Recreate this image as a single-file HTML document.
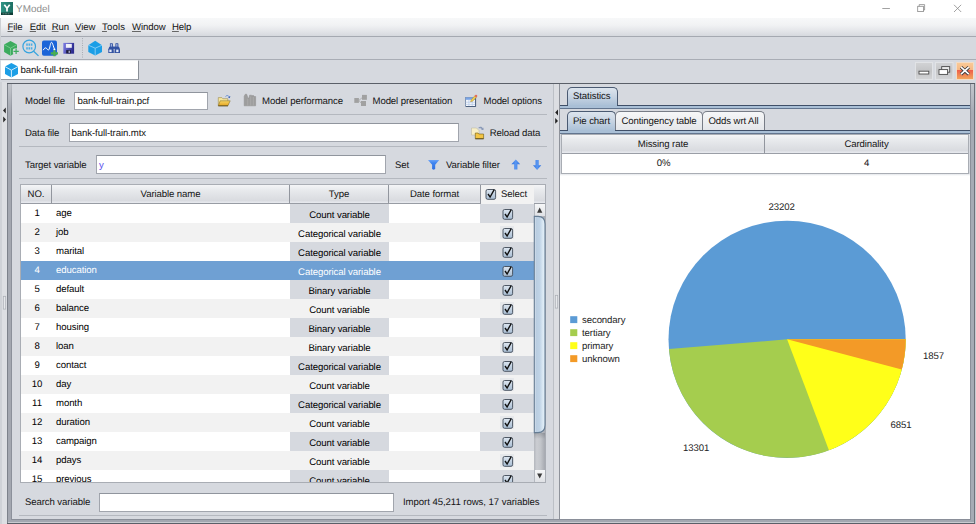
<!DOCTYPE html>
<html><head><meta charset="utf-8"><title>YModel</title>
<style>
*{box-sizing:border-box;margin:0;padding:0}
html,body{width:976px;height:524px;overflow:hidden;background:#d6d9df}
body{position:relative;font-family:"Liberation Sans",Arial,sans-serif;font-size:9.6px;letter-spacing:-0.1px;color:#141414;line-height:1;text-rendering:geometricPrecision}
.abs{position:absolute}
.t{position:absolute;white-space:nowrap;line-height:12px;height:12px;margin-top:1px}
u{text-decoration:underline;text-decoration-color:#666;text-decoration-thickness:0.8px;text-underline-offset:1px}
#title{left:0;top:0;width:976px;height:18px;background:#fff}
#menu{left:0;top:18px;width:976px;height:18px;background:linear-gradient(#f7f8f9 0%,#f1f2f4 40%,#e2e4e8 75%,#d6d9de 100%)}
#menuline{left:0;top:36px;width:976px;height:1px;background:#a5a9b1}
#toolline{left:0;top:59px;width:976px;height:1px;background:#a9adb5}
.inp{position:absolute;background:#fff;border:1px solid #a1a5ad;border-top-color:#90959d;height:18px}
.sep{position:absolute;height:1px;background:#b4b8bf;left:19px;width:528px}
.hdr{position:absolute;top:185px;height:19px;background:linear-gradient(#f4f5f7 0%,#e8eaed 28%,#dcdee2 75%,#d9dbe0 86%,#e9ebf0 100%);border-right:1px solid #92969e;border-bottom:1px solid #989ca4;text-align:center;line-height:20px;overflow:hidden}
#tbl{left:21px;top:204px;width:513px;height:278px;overflow:hidden;background:#fff}
.row{position:absolute;left:0;width:513px;height:19px;line-height:19px}
.row span{position:absolute;top:0;height:19px}
.c-no{left:0;width:32px;text-align:center;top:0 !important}
.c-name{left:35px;top:0 !important}
.c-type{left:269px;width:99px;text-align:center;line-height:23px;overflow:hidden}
.c-sel{left:459px;width:54px}
.tab{position:absolute;border:1px solid #4a5a72;border-bottom:none;border-radius:5px 5px 0 0;text-align:center}
.rh{position:absolute;top:135px;height:19px;background:linear-gradient(#f4f5f7 0%,#e8eaed 28%,#dcdee2 75%,#d9dbe0 86%,#e9ebf0 100%);border-bottom:1px solid #9a9ea6;text-align:center;line-height:20px;overflow:hidden}
</style></head>
<body>
<svg class="abs" width="0" height="0" style="left:0;top:0"><defs><linearGradient id="cbg" x1="0" y1="0" x2="0" y2="1"><stop offset="0" stop-color="#dde6f0"/><stop offset="1" stop-color="#a8bdd3"/></linearGradient></defs></svg>
<!-- title bar -->
<div id="title" class="abs">
  <svg class="abs" style="left:1px;top:2px" width="12" height="13" viewBox="0 0 12 13"><defs><linearGradient id="yg" x1="0" y1="0" x2="1" y2="0"><stop offset="0" stop-color="#2f9485"/><stop offset="1" stop-color="#1f6f63"/></linearGradient></defs><rect width="12" height="13" fill="url(#yg)"/><rect y="10.6" width="12" height="2.4" fill="#0f3d36"/><path d="M1.5 11.8 H8.5" stroke="#8fb5ae" stroke-width="0.6" stroke-dasharray="2 0.5"/><path d="M3.300 2.700 L6 6.200 L8.700 2.700 M6 6 V9.500" stroke="#fff" stroke-width="1.700" fill="none"/></svg>
  <span class="t" style="left:16px;top:3px;color:#8c8c8c;font-size:9.900px;letter-spacing:0.050px">YModel</span>
  <svg class="abs" style="left:876px;top:0" width="100" height="18" viewBox="876 0 100 18"><g stroke="#8a8a8a" stroke-width="0.8" fill="none"><path d="M882.3 8.500 H889.900"/><rect x="917.700" y="6.300" width="5.800" height="5.300"/><path d="M919.200 6.300 V4.600 H924.600 V10 H923.500"/><path d="M954 4.800 L961.200 12 M961.200 4.800 L954 12"/></g></svg>
</div>
<!-- menu -->
<div id="menu" class="abs">
  <span class="t" style="left:7.500px;top:3px"><u>F</u>ile</span>
  <span class="t" style="left:29.700px;top:3px"><u>E</u>dit</span>
  <span class="t" style="left:51.700px;top:3px"><u>R</u>un</span>
  <span class="t" style="left:75px;top:3px"><u>V</u>iew</span>
  <span class="t" style="left:102px;top:3px;letter-spacing:0.150px"><u>T</u>ools</span>
  <span class="t" style="left:132px;top:3px"><u>W</u>indow</span>
  <span class="t" style="left:172px;top:3px"><u>H</u>elp</span>
</div>
<div id="menuline" class="abs"></div>
<div class="abs" style="left:0;top:18px;width:1px;height:42px;background:#cdd0d4"></div>
<!-- toolbar icons (absolute page coordinates) -->
<svg class="abs" style="left:0;top:37px" width="130" height="22" viewBox="0 37 130 22">
  <!-- green cube plus -->
  <path d="M10.5 40.9 L17 44.5 V52 L10.5 55.7 L4.1 52 V44.5 Z" fill="#3cab5e"/>
  <path d="M4.1 44.5 L10.5 48.2 L17 44.5 M10.5 48.2 V55.7" stroke="#8bd6a1" stroke-width="0.7" fill="none"/>
  <rect x="12.9" y="48.6" width="6.3" height="5.6" rx="1.5" fill="#d6d9df"/>
  <path d="M16.1 48.9 V53.9 M13.5 51.4 H18.8" stroke="#3cab5e" stroke-width="1.2"/>
  <!-- magnifier -->
  <circle cx="29.2" cy="46.5" r="6.3" fill="none" stroke="#35a3de" stroke-width="1.2"/>
  <path d="M33.6 51.3 L38.5 55.9" stroke="#35a3de" stroke-width="1.3"/>
  <path d="M26.2 44.6 H32.4 M26.2 48.4 H32.4" stroke="#4aaee4" stroke-width="2.2" stroke-dasharray="1.6 0.7"/>
  <!-- chart plus -->
  <rect x="42" y="40.6" width="15" height="15.1" rx="1.8" fill="#1b64d8"/>
  <path d="M43.2 50.2 C44.3 48 45.5 47.4 46.4 48.2 C47.4 49.2 48 50.6 48.8 49.8 C49.9 48.6 50.4 42.3 51.5 42.3 C52.6 42.3 53.2 46.5 54.6 49.3" stroke="#fff" stroke-width="1" fill="none"/>
  <circle cx="54.4" cy="49.6" r="1" fill="#fff"/>
  <path d="M54.4 50.3 V56.3 M50.8 53.3 H58" stroke="#4bb04f" stroke-width="2.3"/>
  <!-- floppy -->
  <defs><linearGradient id="fl" x1="0" y1="0" x2="1" y2="0.3"><stop offset="0" stop-color="#7f7fe6"/><stop offset="1" stop-color="#2d2d90"/></linearGradient></defs>
  <rect x="63.3" y="42.9" width="10.8" height="10.8" fill="url(#fl)"/>
  <rect x="65.9" y="43.9" width="5.9" height="3.9" fill="#f0f1f8"/>
  <rect x="66.2" y="50.1" width="4.6" height="3.3" fill="#1d1d3c"/>
  <rect x="68.6" y="50.7" width="1.2" height="2.2" fill="#c7c9e6"/>
  <!-- dotted separator -->
  <line x1="82.5" y1="38.2" x2="82.5" y2="57.8" stroke="#a3a7ae" stroke-width="1" stroke-dasharray="0.9 1.4"/>
  <!-- blue cube -->
  <path d="M95.2 40.7 L102 45.2 V52 L95.2 55.5 L88.3 52 V45.2 Z" fill="#1b9ee6"/>
  <path d="M88.3 45.2 L95.2 48.2 L102 45.2 M95.2 48.2 V55.5" stroke="#9ad6f7" stroke-width="0.8" fill="none"/>
  <!-- binoculars -->
  <g fill="#3252a2"><rect x="109.900" y="43.300" width="3" height="4.200" rx="0.500"/><rect x="115.400" y="43.300" width="3" height="4.200" rx="0.500"/><path d="M109.300 46.800 H113.400 L113.900 52.900 H108.300 V49.200 Z"/><path d="M114.900 46.800 H119 L120 49.200 V52.900 H114.400 Z"/><rect x="112.800" y="46.600" width="2.800" height="2.300"/></g>
  <rect x="109.300" y="49.600" width="2.300" height="2.500" fill="#e3e9f7"/><rect x="116.200" y="49.600" width="2.300" height="2.500" fill="#e3e9f7"/>
  <rect x="110.700" y="44" width="1.300" height="2.600" fill="#9fb2de"/><rect x="116.200" y="44" width="1.300" height="2.600" fill="#9fb2de"/>
</svg>
<div id="toolline" class="abs"></div>
<!-- document tab -->
<div class="abs" style="left:1px;top:60px;width:138px;height:20px;background:#fff;border-right:1px solid #8a8f97;border-bottom:1px solid #9a9ea6;border-top:1px solid #eceef0"></div>
<svg class="abs" style="left:4px;top:62px" width="16" height="17" viewBox="4 62 16 17"><path d="M11.400 63 L18 66.600 V74 L11.400 77.600 L5 74 V66.600 Z" fill="#1b9ee6"/><path d="M5 66.600 L11.400 70.200 L18 66.600 M11.400 70.200 V77.600" stroke="#e6f4fd" stroke-width="0.900" fill="none"/></svg>
<span class="t" style="left:20.500px;top:64px">bank-full-train</span>
<!-- internal frame buttons -->
<svg class="abs" style="left:912px;top:60px" width="64" height="22" viewBox="912 60 64 22">
  <defs>
    <linearGradient id="gb" x1="0" y1="0" x2="0" y2="1"><stop offset="0" stop-color="#d2d3d5"/><stop offset="0.500" stop-color="#c3c4c6"/><stop offset="1" stop-color="#d4d5d7"/></linearGradient>
    <linearGradient id="gc" x1="0" y1="0" x2="0" y2="1"><stop offset="0" stop-color="#f9cb98"/><stop offset="0.440" stop-color="#f6b884"/><stop offset="0.460" stop-color="#ee5f49"/><stop offset="1" stop-color="#f3a95c"/></linearGradient>
  </defs>
  <rect x="915.500" y="62.500" width="17" height="17" fill="url(#gb)" stroke="#e1e3e6"/>
  <rect x="919" y="71.200" width="9.800" height="2.800" fill="#fff" stroke="#4a4a4a" stroke-width="0.900"/>
  <rect x="935.500" y="62.500" width="17.500" height="17" fill="url(#gb)" stroke="#e1e3e6"/>
  <rect x="941.700" y="66.600" width="8" height="5.600" fill="#e9e9e9" stroke="#4a4a4a" stroke-width="0.900"/>
  <rect x="939" y="69.600" width="8.600" height="4.800" fill="#fff" stroke="#4a4a4a" stroke-width="0.900"/>
  <rect x="956.500" y="62.500" width="17" height="17" fill="url(#gc)" stroke="#f3dcc6"/>
  <path d="M961 67.200 L968.800 74.200 M968.800 67.200 L961 74.200" stroke="#3a3a3a" stroke-width="3.400"/>
  <path d="M961 67.200 L968.800 74.200 M968.800 67.200 L961 74.200" stroke="#fff" stroke-width="1.700"/>
</svg>
<!-- left strip (collapsed divider) -->
<div class="abs" style="left:0;top:82px;width:2px;height:442px;background:#cfd2d7"></div>
<div class="abs" style="left:2px;top:82px;width:5px;height:442px;background:#dddfe3"></div>
<!-- main frame -->
<div class="abs" style="left:7px;top:83px;width:968px;height:441px;background:#d6d9df"></div>
<div class="abs" style="left:7px;top:83px;width:1px;height:441px;background:#7d828b"></div>
<div class="abs" style="left:8px;top:83px;width:3px;height:441px;background:linear-gradient(#c4c7cd 0,#a3a7b0 30px)"></div>
<div class="abs" style="left:11px;top:84px;width:1px;height:435px;background:linear-gradient(#b9bcc3 0,#8b909a 30px)"></div>
<div class="abs" style="left:970px;top:84px;width:1px;height:435px;background:#8a8f99"></div>
<div class="abs" style="left:971px;top:83px;width:3px;height:441px;background:linear-gradient(#c4c7cd 0,#a6abb5 30px)"></div>
<div class="abs" style="left:974px;top:83px;width:1px;height:441px;background:#6d727b"></div>
<div class="abs" style="left:975px;top:83px;width:1px;height:441px;background:#c9ccd2"></div>
<div class="abs" style="left:11px;top:519px;width:960px;height:1px;background:#8a8f99"></div>
<div class="abs" style="left:8px;top:520px;width:966px;height:2px;background:#a2a7b0"></div>
<div class="abs" style="left:8px;top:522px;width:966px;height:1px;background:#c8cbd0"></div>
<div class="abs" style="left:7px;top:523px;width:968px;height:1px;background:#5a5f68"></div>
<div class="abs" style="left:7px;top:83px;width:968px;height:1px;background:#5a5f68"></div>
<!-- left edge arrows + handle -->
<svg class="abs" style="left:0;top:100px" width="8" height="30" viewBox="0 100 8 30"><path d="M5.800 107.600 V113.400 L3 110.500 Z M3.200 116.600 V122.400 L6 119.500 Z" fill="#2a2a2a"/></svg>
<svg class="abs" style="left:2px;top:295px" width="5" height="16" viewBox="2 295 5 16"><rect x="3.300" y="296.300" width="2.400" height="12.800" fill="#e6e8eb" stroke="#a9adb4" stroke-width="0.700"/></svg>

<!-- row 1 -->
<span class="t" style="left:25px;top:95px">Model file</span>
<div class="inp" style="left:74px;top:92px;width:134px"></div>
<span class="t" style="left:77.500px;top:95px">bank-full-train.pcf</span>
<svg class="abs" style="left:216px;top:93px" width="16" height="15" viewBox="216 93 16 15">
  <defs><linearGradient id="fo" x1="0" y1="0" x2="0" y2="1"><stop offset="0" stop-color="#f7d566"/><stop offset="1" stop-color="#e5a520"/></linearGradient></defs>
  <path d="M218.300 97.600 H221.800 L222.800 98.700 H227.800 V105.500 H218.300 Z" fill="#f6e69c" stroke="#8d7a3a" stroke-width="0.500"/>
  <path d="M220.200 100.800 H230.200 L227.900 105.700 H218.300 Z" fill="url(#fo)" stroke="#7a6520" stroke-width="0.500"/>
  <path d="M218.300 105.900 H228" stroke="#4f4214" stroke-width="0.700"/>
  <path d="M225.500 96.600 C226.400 95.200 228.300 95.200 229.300 96.800" stroke="#5a86d0" stroke-width="0.900" fill="none"/><path d="M230.400 96 L229.800 98.300 L227.900 97.300 Z" fill="#3a62b4"/>
</svg>
<svg class="abs" style="left:243px;top:93px" width="14" height="14" viewBox="243 93 14 14"><path d="M244.200 105.800 V96.200 L245.300 94.200 H246.600 L247.500 96.500 V98 H249 L249.600 95.200 H251.300 L252.200 96 V95.600 H253.600 L254.300 96.500 H255.600 V105.800 Z" fill="#9d9d9d" stroke="#8c8c8c" stroke-width="0.500"/><path d="M247.700 98.500 V105.500 M250.700 96.500 V105.500 M253.300 97 V105.500" stroke="#b9b9b9" stroke-width="0.500"/></svg>
<span class="t" style="left:262px;top:95px">Model performance</span>
<svg class="abs" style="left:353px;top:93px" width="15" height="14" viewBox="353 93 15 14"><g fill="#a1a1a1"><rect x="354.300" y="98" width="4.600" height="4.900"/><rect x="362" y="94.900" width="4.900" height="4.900"/><rect x="361" y="101" width="5" height="5"/></g><path d="M358.900 100.400 L362 97.800 M358.900 100.400 L361 103" stroke="#a8a8a8" stroke-width="0.800" fill="none"/></svg>
<span class="t" style="left:372.500px;top:95px">Model presentation</span>
<svg class="abs" style="left:464px;top:93px" width="15" height="15" viewBox="464 93 15 15">
  <rect x="465.600" y="97.400" width="10" height="9.100" fill="#f4f7fc" stroke="#6a7f9e" stroke-width="0.800"/>
  <rect x="465.600" y="97.400" width="10" height="2.400" fill="#79a4e4"/>
  <path d="M465.600 102.200 H475.600 M465.600 104.400 H475.600 M468.900 99.800 V106.500 M472.200 99.800 V106.500" stroke="#b5c8e6" stroke-width="0.700"/>
  <path d="M475.600 98 V106.500 H466" stroke="#475a78" stroke-width="0.900" fill="none"/>
  <path d="M470.500 101.800 L471.200 99.800 L475 95.600 L476.600 97 L472.700 101.200 Z" fill="#f0cf52" stroke="#9a7a2a" stroke-width="0.400"/>
  <circle cx="476" cy="96" r="1.300" fill="#e2705c"/>
</svg>
<span class="t" style="left:483.500px;top:95px">Model options</span>
<div class="sep" style="top:114px"></div>

<!-- row 2 -->
<span class="t" style="left:25px;top:127px">Data file</span>
<div class="inp" style="left:69px;top:123px;width:390px;height:19px"></div>
<span class="t" style="left:71.600px;top:127px">bank-full-train.mtx</span>
<svg class="abs" style="left:470px;top:125px" width="15" height="15" viewBox="470 125 15 15">
  <path d="M471.500 128 H476.500 L479 130.500 V135 H471.500 Z" fill="#f7efc8" stroke="#b5b09a" stroke-width="0.500"/>
  <path d="M478.300 127.800 C479.600 126.400 481.800 126.600 482.800 128.200 L483.500 127.500 V130 H481 L481.800 129.200 C481 128 479.800 128 479 128.600 Z" fill="#8a9ab8"/>
  <path d="M475.300 133 H478 L478.800 134 H483.600 V138.700 H475.300 Z" fill="#f3c544" stroke="#6f5a14" stroke-width="0.600"/>
  <path d="M475.300 138.800 H483.600" stroke="#3f340c" stroke-width="0.700"/>
</svg>
<span class="t" style="left:489.700px;top:127px">Reload data</span>
<div class="sep" style="top:146px"></div>

<!-- row 3 -->
<span class="t" style="left:25px;top:159px">Target variable</span>
<div class="inp" style="left:96px;top:155px;width:290px;height:19px"></div>
<span class="t" style="left:99px;top:159px;color:#5a50ee">y</span>
<span class="t" style="left:395px;top:159px">Set</span>
<svg class="abs" style="left:427px;top:159px" width="14" height="12" viewBox="427 159 14 12"><defs><linearGradient id="fg" x1="0" y1="0" x2="0" y2="1"><stop offset="0" stop-color="#6aa2f6"/><stop offset="0.300" stop-color="#3f84f0"/><stop offset="1" stop-color="#2f6fe0"/></linearGradient></defs><path d="M428 160.100 H439.200 L435.200 164.800 V169 L433.600 169.800 L432.100 169 V164.800 Z" fill="url(#fg)"/></svg>
<span class="t" style="left:446px;top:159px">Variable filter</span>
<svg class="abs" style="left:510px;top:158px" width="33" height="13" viewBox="510 158 33 13"><defs><linearGradient id="ag" x1="0" y1="0" x2="1" y2="0"><stop offset="0" stop-color="#2a6fe0"/><stop offset="0.500" stop-color="#5b98f2"/><stop offset="1" stop-color="#2a6fe0"/></linearGradient></defs>
<path d="M515.800 159.400 L520.200 164.200 H517.400 V169.500 H514.200 V164.200 H511.400 Z" fill="url(#ag)"/>
<path d="M537.100 170 L541.300 165.300 H538.700 V160.100 H535.500 V165.300 H533 Z" fill="url(#ag)"/></svg>
<div class="sep" style="top:178px"></div>

<!-- table -->
<div class="abs" style="left:20px;top:184px;width:526px;height:299px;border:1px solid #a9adb4;background:#d6d9df"></div>
<div class="hdr" style="left:21px;width:31px">NO.</div>
<div class="hdr" style="left:52px;width:238px">Variable name</div>
<div class="hdr" style="left:290px;width:99px">Type</div>
<div class="hdr" style="left:389px;width:92px">Date format</div>
<div class="hdr" style="left:481px;width:53px;background:#f2f2f2;border-right:none;border-bottom:none"></div>
<div class="hdr" style="left:534px;width:11px;border-right:none"></div>
<svg class="abs" style="left:485.2px;top:188.0px" width="12" height="12" viewBox="-0.5 -1 12 12"><rect x="0.5" y="0.5" width="9.6" height="9.8" rx="1.6" fill="url(#cbg)" stroke="#3f4957" stroke-width="0.9"/><path d="M2.5 5 L4.6 8 L8.7 0.6" fill="none" stroke="#111" stroke-width="1.35"/></svg>
<span class="t" style="left:501px;top:188px">Select</span>
<div id="tbl" class="abs">
<div class="row" style="top:0.0px;background:#ffffff;color:#000"><span class="c-no">1</span><span class="c-name">age</span><span class="c-type" style="background:#d6d9df">Count variable</span><span class="c-sel" style="background:#d6d9df"></span><svg class="abs" style="left:480.8px;top:4.4px" width="12" height="12" viewBox="-0.5 -1 12 12"><rect x="0.5" y="0.5" width="9.6" height="9.8" rx="1.6" fill="url(#cbg)" stroke="#3f4957" stroke-width="0.9"/><path d="M2.5 5 L4.6 8 L8.7 0.6" fill="none" stroke="#111" stroke-width="1.35"/></svg></div>
<div class="row" style="top:19.0px;background:#f2f2f2;color:#000"><span class="c-no">2</span><span class="c-name">job</span><span class="c-type" style="background:#f2f2f2">Categorical variable</span><span class="c-sel" style="background:#f2f2f2"></span><span style="left:479.4px;top:3.2px;width:13.6px;height:13px;background:#e6e8eb"></span><svg class="abs" style="left:480.8px;top:4.4px" width="12" height="12" viewBox="-0.5 -1 12 12"><rect x="0.5" y="0.5" width="9.6" height="9.8" rx="1.6" fill="url(#cbg)" stroke="#3f4957" stroke-width="0.9"/><path d="M2.5 5 L4.6 8 L8.7 0.6" fill="none" stroke="#111" stroke-width="1.35"/></svg></div>
<div class="row" style="top:38.0px;background:#ffffff;color:#000"><span class="c-no">3</span><span class="c-name">marital</span><span class="c-type" style="background:#d6d9df">Categorical variable</span><span class="c-sel" style="background:#d6d9df"></span><svg class="abs" style="left:480.8px;top:4.4px" width="12" height="12" viewBox="-0.5 -1 12 12"><rect x="0.5" y="0.5" width="9.6" height="9.8" rx="1.6" fill="url(#cbg)" stroke="#3f4957" stroke-width="0.9"/><path d="M2.5 5 L4.6 8 L8.7 0.6" fill="none" stroke="#111" stroke-width="1.35"/></svg></div>
<div class="row" style="top:57.0px;background:#6fa0d3;color:#fff"><span class="c-no">4</span><span class="c-name">education</span><span class="c-type" style="background:#6fa0d3">Categorical variable</span><span class="c-sel" style="background:#6fa0d3"></span><svg class="abs" style="left:480.8px;top:4.4px" width="12" height="12" viewBox="-0.5 -1 12 12"><rect x="0.5" y="0.5" width="9.6" height="9.8" rx="1.6" fill="url(#cbg)" stroke="#3f4957" stroke-width="0.9"/><path d="M2.5 5 L4.6 8 L8.7 0.6" fill="none" stroke="#111" stroke-width="1.35"/></svg></div>
<div class="row" style="top:76.0px;background:#ffffff;color:#000"><span class="c-no">5</span><span class="c-name">default</span><span class="c-type" style="background:#d6d9df">Binary variable</span><span class="c-sel" style="background:#d6d9df"></span><svg class="abs" style="left:480.8px;top:4.4px" width="12" height="12" viewBox="-0.5 -1 12 12"><rect x="0.5" y="0.5" width="9.6" height="9.8" rx="1.6" fill="url(#cbg)" stroke="#3f4957" stroke-width="0.9"/><path d="M2.5 5 L4.6 8 L8.7 0.6" fill="none" stroke="#111" stroke-width="1.35"/></svg></div>
<div class="row" style="top:95.0px;background:#f2f2f2;color:#000"><span class="c-no">6</span><span class="c-name">balance</span><span class="c-type" style="background:#f2f2f2">Count variable</span><span class="c-sel" style="background:#f2f2f2"></span><span style="left:479.4px;top:3.2px;width:13.6px;height:13px;background:#e6e8eb"></span><svg class="abs" style="left:480.8px;top:4.4px" width="12" height="12" viewBox="-0.5 -1 12 12"><rect x="0.5" y="0.5" width="9.6" height="9.8" rx="1.6" fill="url(#cbg)" stroke="#3f4957" stroke-width="0.9"/><path d="M2.5 5 L4.6 8 L8.7 0.6" fill="none" stroke="#111" stroke-width="1.35"/></svg></div>
<div class="row" style="top:114.0px;background:#ffffff;color:#000"><span class="c-no">7</span><span class="c-name">housing</span><span class="c-type" style="background:#d6d9df">Binary variable</span><span class="c-sel" style="background:#d6d9df"></span><svg class="abs" style="left:480.8px;top:4.4px" width="12" height="12" viewBox="-0.5 -1 12 12"><rect x="0.5" y="0.5" width="9.6" height="9.8" rx="1.6" fill="url(#cbg)" stroke="#3f4957" stroke-width="0.9"/><path d="M2.5 5 L4.6 8 L8.7 0.6" fill="none" stroke="#111" stroke-width="1.35"/></svg></div>
<div class="row" style="top:133.0px;background:#f2f2f2;color:#000"><span class="c-no">8</span><span class="c-name">loan</span><span class="c-type" style="background:#f2f2f2">Binary variable</span><span class="c-sel" style="background:#f2f2f2"></span><span style="left:479.4px;top:3.2px;width:13.6px;height:13px;background:#e6e8eb"></span><svg class="abs" style="left:480.8px;top:4.4px" width="12" height="12" viewBox="-0.5 -1 12 12"><rect x="0.5" y="0.5" width="9.6" height="9.8" rx="1.6" fill="url(#cbg)" stroke="#3f4957" stroke-width="0.9"/><path d="M2.5 5 L4.6 8 L8.7 0.6" fill="none" stroke="#111" stroke-width="1.35"/></svg></div>
<div class="row" style="top:152.0px;background:#ffffff;color:#000"><span class="c-no">9</span><span class="c-name">contact</span><span class="c-type" style="background:#d6d9df">Categorical variable</span><span class="c-sel" style="background:#d6d9df"></span><svg class="abs" style="left:480.8px;top:4.4px" width="12" height="12" viewBox="-0.5 -1 12 12"><rect x="0.5" y="0.5" width="9.6" height="9.8" rx="1.6" fill="url(#cbg)" stroke="#3f4957" stroke-width="0.9"/><path d="M2.5 5 L4.6 8 L8.7 0.6" fill="none" stroke="#111" stroke-width="1.35"/></svg></div>
<div class="row" style="top:171.0px;background:#f2f2f2;color:#000"><span class="c-no">10</span><span class="c-name">day</span><span class="c-type" style="background:#f2f2f2">Count variable</span><span class="c-sel" style="background:#f2f2f2"></span><span style="left:479.4px;top:3.2px;width:13.6px;height:13px;background:#e6e8eb"></span><svg class="abs" style="left:480.8px;top:4.4px" width="12" height="12" viewBox="-0.5 -1 12 12"><rect x="0.5" y="0.5" width="9.6" height="9.8" rx="1.6" fill="url(#cbg)" stroke="#3f4957" stroke-width="0.9"/><path d="M2.5 5 L4.6 8 L8.7 0.6" fill="none" stroke="#111" stroke-width="1.35"/></svg></div>
<div class="row" style="top:190.0px;background:#ffffff;color:#000"><span class="c-no">11</span><span class="c-name">month</span><span class="c-type" style="background:#d6d9df">Categorical variable</span><span class="c-sel" style="background:#d6d9df"></span><svg class="abs" style="left:480.8px;top:4.4px" width="12" height="12" viewBox="-0.5 -1 12 12"><rect x="0.5" y="0.5" width="9.6" height="9.8" rx="1.6" fill="url(#cbg)" stroke="#3f4957" stroke-width="0.9"/><path d="M2.5 5 L4.6 8 L8.7 0.6" fill="none" stroke="#111" stroke-width="1.35"/></svg></div>
<div class="row" style="top:209.0px;background:#f2f2f2;color:#000"><span class="c-no">12</span><span class="c-name">duration</span><span class="c-type" style="background:#f2f2f2">Count variable</span><span class="c-sel" style="background:#f2f2f2"></span><span style="left:479.4px;top:3.2px;width:13.6px;height:13px;background:#e6e8eb"></span><svg class="abs" style="left:480.8px;top:4.4px" width="12" height="12" viewBox="-0.5 -1 12 12"><rect x="0.5" y="0.5" width="9.6" height="9.8" rx="1.6" fill="url(#cbg)" stroke="#3f4957" stroke-width="0.9"/><path d="M2.5 5 L4.6 8 L8.7 0.6" fill="none" stroke="#111" stroke-width="1.35"/></svg></div>
<div class="row" style="top:228.0px;background:#ffffff;color:#000"><span class="c-no">13</span><span class="c-name">campaign</span><span class="c-type" style="background:#d6d9df">Count variable</span><span class="c-sel" style="background:#d6d9df"></span><svg class="abs" style="left:480.8px;top:4.4px" width="12" height="12" viewBox="-0.5 -1 12 12"><rect x="0.5" y="0.5" width="9.6" height="9.8" rx="1.6" fill="url(#cbg)" stroke="#3f4957" stroke-width="0.9"/><path d="M2.5 5 L4.6 8 L8.7 0.6" fill="none" stroke="#111" stroke-width="1.35"/></svg></div>
<div class="row" style="top:247.0px;background:#f2f2f2;color:#000"><span class="c-no">14</span><span class="c-name">pdays</span><span class="c-type" style="background:#f2f2f2">Count variable</span><span class="c-sel" style="background:#f2f2f2"></span><span style="left:479.4px;top:3.2px;width:13.6px;height:13px;background:#e6e8eb"></span><svg class="abs" style="left:480.8px;top:4.4px" width="12" height="12" viewBox="-0.5 -1 12 12"><rect x="0.5" y="0.5" width="9.6" height="9.8" rx="1.6" fill="url(#cbg)" stroke="#3f4957" stroke-width="0.9"/><path d="M2.5 5 L4.6 8 L8.7 0.6" fill="none" stroke="#111" stroke-width="1.35"/></svg></div>
<div class="row" style="top:266.0px;background:#ffffff;color:#000"><span class="c-no">15</span><span class="c-name">previous</span><span class="c-type" style="background:#d6d9df">Count variable</span><span class="c-sel" style="background:#d6d9df"></span><svg class="abs" style="left:480.8px;top:4.4px" width="12" height="12" viewBox="-0.5 -1 12 12"><rect x="0.5" y="0.5" width="9.6" height="9.8" rx="1.6" fill="url(#cbg)" stroke="#3f4957" stroke-width="0.9"/><path d="M2.5 5 L4.6 8 L8.7 0.6" fill="none" stroke="#111" stroke-width="1.35"/></svg></div>
</div>
<!-- scrollbar -->
<div class="abs" style="left:534px;top:204px;width:11px;height:278px;background:linear-gradient(90deg,#b4b7bd 0%,#cbcdd2 25%,#c2c5ca 60%,#a6a9b0 100%)"></div>
<div class="abs" style="left:534px;top:433px;width:11px;height:37px;background:linear-gradient(rgba(60,64,72,0.25),rgba(60,64,72,0) 6px)"></div>
<div class="abs" style="left:534px;top:204px;width:11px;height:12px;background:linear-gradient(#f6f7f8,#dfe1e5);border-left:1px solid #b4b8bf"></div>
<svg class="abs" style="left:536px;top:206px" width="8" height="8" viewBox="0 0 8 8"><path d="M3.700 1.600 L6.300 6.800 H1.100 Z" fill="#3a3a3a"/></svg>
<div class="abs" style="left:534px;top:470px;width:11px;height:12px;background:linear-gradient(#f6f7f8,#dfe1e5);border-left:1px solid #b4b8bf"></div>
<svg class="abs" style="left:536px;top:472px" width="8" height="8" viewBox="0 0 8 8"><path d="M3.700 6.600 L6.300 1.400 H1.100 Z" fill="#3a3a3a"/></svg>
<svg class="abs" style="left:533px;top:215px" width="14" height="220" viewBox="533 215 14 220"><defs><linearGradient id="th" x1="0" y1="0" x2="1" y2="0"><stop offset="0" stop-color="#e3eaf2"/><stop offset="0.18" stop-color="#b9cde1"/><stop offset="0.5" stop-color="#bfd3e6"/><stop offset="0.8" stop-color="#dbe9f4"/><stop offset="1" stop-color="#e6f2fa"/></linearGradient></defs><path d="M534.3 216.400 H538 C542.500 216.400 545 219.500 545 224 V425 C545 429.500 542.500 432.600 538 432.600 H534.300 Z" fill="url(#th)" stroke="#667d94" stroke-width="1.100"/></svg>

<!-- search row -->
<span class="t" style="left:25px;top:496px">Search variable</span>
<div class="inp" style="left:99px;top:493px;width:295px;height:19px"></div>
<span class="t" style="left:403px;top:496px;letter-spacing:-0.060px">Import 45,211 rows, 17 variables</span>
<div class="sep" style="top:515px"></div>

<!-- divider -->
<div class="abs" style="left:553px;top:84px;width:1px;height:435px;background:#bcc0c6"></div>
<div class="abs" style="left:554px;top:84px;width:5px;height:435px;background:#dcdee2"></div>
<div class="abs" style="left:559px;top:84px;width:1px;height:435px;background:#8e929a"></div>
<svg class="abs" style="left:553px;top:106px" width="7" height="22" viewBox="553 106 7 22"><path d="M558 109.600 V115.400 L555.200 112.500 Z M555.200 118 V123.800 L558 120.900 Z" fill="#222"/></svg>
<svg class="abs" style="left:554px;top:294px" width="5" height="16" viewBox="554 294 5 16"><rect x="555.300" y="295.300" width="2.400" height="12.800" fill="#e6e8eb" stroke="#a9adb4" stroke-width="0.700"/></svg>
<!-- right panel -->
<div class="tab" style="left:567px;top:87px;width:51px;height:19px;line-height:17px;background:linear-gradient(#dde5ee 0%,#c6d3e2 50%,#a9bfd6 100%)"><span style="position:relative;left:-0.800px">Statistics</span></div>
<div class="abs" style="left:560px;top:105px;width:410px;height:4px;border-top:1px solid #3f4f68;border-bottom:1px solid #62758f;background:#a9bfd6"></div>
<div class="abs" style="left:568px;top:105px;width:49px;height:1px;background:#a9bfd6"></div>
<div class="tab" style="left:567px;top:111px;width:49px;height:20px;line-height:19px;background:linear-gradient(#dde5ee 0%,#c6d3e2 50%,#a9bfd6 100%)">Pie chart</div>
<div class="tab" style="left:615px;top:111px;width:88px;height:20px;line-height:19px;background:linear-gradient(#f6f7f8,#e3e5e9);border-color:#777c86">Contingency table</div>
<div class="tab" style="left:702px;top:111px;width:63px;height:20px;line-height:19px;background:linear-gradient(#f6f7f8,#e3e5e9);border-color:#777c86">Odds wrt All</div>
<div class="abs" style="left:560px;top:130px;width:410px;height:4px;border-top:1px solid #3f4f68;border-bottom:1px solid #62758f;background:#a9bfd6"></div>
<div class="abs" style="left:568px;top:130px;width:47px;height:1px;background:#a9bfd6"></div>
<div class="abs" style="left:561px;top:134px;width:408px;height:40px;border:1px solid #a9adb4;background:#fff"></div>
<div class="rh" style="left:562px;width:203px;border-right:1px solid #92969e">Missing rate</div>
<div class="rh" style="left:765px;width:203px">Cardinality</div>
<span class="t" style="left:562px;top:157px;width:203px;text-align:center">0%</span>
<span class="t" style="left:765px;top:157px;width:203px;text-align:center">4</span>
<div class="abs" style="left:560px;top:174px;width:410px;height:345px;background:linear-gradient(#e4e6ea 0,#fff 2px)"></div>
<svg class="abs" style="left:0;top:0" width="976" height="524" viewBox="0 0 976 524" font-family="Liberation Sans, Arial, sans-serif" font-size="9.6" letter-spacing="-0.1" fill="#1e1e1e" text-rendering="geometricPrecision">
<circle cx="787.1" cy="339.3" r="118.6" fill="#5b9bd5"/>
<path d="M787.1 339.3 L668.91 349.12 A118.6 118.6 0 0 0 905.70 339.30 Z" fill="#a5cd4e"/>
<path d="M787.1 339.3 L828.95 450.27 A118.6 118.6 0 0 0 905.70 339.30 Z" fill="#ffff19"/>
<path d="M787.1 339.3 L901.77 369.57 A118.6 118.6 0 0 0 905.70 339.30 Z" fill="#f39a27"/>
<rect x="570.200" y="316.200" width="7.100" height="6.900" fill="#5b9bd5"/><text x="582" y="322.5">secondary</text>
<rect x="570.200" y="329.200" width="7.100" height="6.900" fill="#a5cd4e"/><text x="582" y="335.5">tertiary</text>
<rect x="570.200" y="342.200" width="7.100" height="6.900" fill="#ffff19"/><text x="582" y="348.5">primary</text>
<rect x="570.200" y="355.200" width="7.100" height="6.900" fill="#f39a27"/><text x="582" y="361.5">unknown</text>
<text x="768.500" y="210">23202</text>
<text x="923" y="359">1857</text>
<text x="890.500" y="427.5">6851</text>
<text x="683" y="450.5">13301</text>
</svg>
</body></html>
